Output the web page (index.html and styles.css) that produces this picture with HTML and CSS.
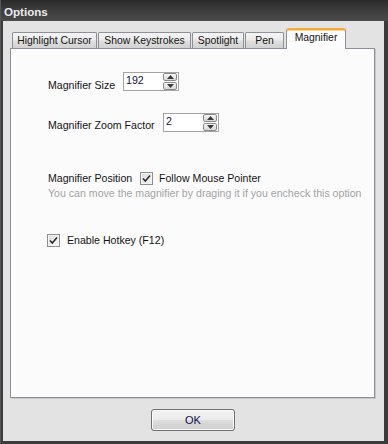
FILE: index.html
```html
<!DOCTYPE html>
<html>
<head>
<meta charset="utf-8">
<link rel="stylesheet" href="styles.css">
</head>
<body>
<div class="window">
  <div class="titlebar">Options</div>
  <div class="client">
    <div class="tabs">
      <div class="tab t1">Highlight Cursor</div>
      <div class="tab t2">Show Keystrokes</div>
      <div class="tab t3">Spotlight</div>
      <div class="tab t4">Pen</div>
      <div class="tab selected t5">Magnifier</div>
    </div>
    <div class="panel">
      <div class="row row-size">
        <span class="label w-size">Magnifier Size</span>
        <div class="spin">
          <span class="spin-value">192</span>
          <div class="spin-buttons">
            <div class="spin-btn"><svg width="7" height="4" viewBox="0 0 7 4"><path d="M0 4 L3.5 0 L7 4 Z" fill="#3a3a3a"/></svg></div>
            <div class="spin-btn"><svg width="7" height="4" viewBox="0 0 7 4"><path d="M0 0 L3.5 4 L7 0 Z" fill="#3a3a3a"/></svg></div>
          </div>
        </div>
      </div>
      <div class="row row-zoom">
        <span class="label w-zoom">Magnifier Zoom Factor</span>
        <div class="spin">
          <span class="spin-value">2</span>
          <div class="spin-buttons">
            <div class="spin-btn"><svg width="7" height="4" viewBox="0 0 7 4"><path d="M0 4 L3.5 0 L7 4 Z" fill="#3a3a3a"/></svg></div>
            <div class="spin-btn"><svg width="7" height="4" viewBox="0 0 7 4"><path d="M0 0 L3.5 4 L7 0 Z" fill="#3a3a3a"/></svg></div>
          </div>
        </div>
      </div>
      <div class="row row-pos">
        <span class="label w-pos">Magnifier Position</span>
        <span class="check"><svg width="11" height="11" viewBox="0 0 11 11"><path d="M2 5.5 L4.3 8 L9 2.5" fill="none" stroke="#2a2a2a" stroke-width="1.5"/></svg></span>
        <span class="check-text">Follow Mouse Pointer</span>
      </div>
      <div class="hint">You can move the magnifier by draging it if you encheck this option</div>
      <div class="row row-hotkey">
        <span class="check"><svg width="11" height="11" viewBox="0 0 11 11"><path d="M2 5.5 L4.3 8 L9 2.5" fill="none" stroke="#2a2a2a" stroke-width="1.5"/></svg></span>
        <span class="check-text hk">Enable Hotkey (F12)</span>
      </div>
    </div>
    <div class="footer">
      <div class="ok">OK</div>
    </div>
  </div>
</div>
</body>
</html>
```

FILE: styles.css
```css
html, body {
  margin: 0;
  padding: 0;
  background: #3a3a3a;
}
.window {
  width: 388px;
  height: 444px;
  box-sizing: border-box;
  display: flex;
  flex-direction: column;
  background: #3b3b3b;
  border-left: 1px solid #555;
  padding: 0 4px 3px 2px;
  font-family: "Liberation Sans", Arial, sans-serif;
  font-size: 10.6px;
  color: #141414;
}
.titlebar {
  height: 21px;
  margin: 0 -4px 0 -2px;
  padding: 3px 0 0 3px;
  box-sizing: border-box;
  line-height: 18px;
  font-weight: bold;
  font-size: 11.6px;
  color: #ececec;
  background: linear-gradient(#2a2a2a, #3a3a3a 40%, #4a4a4a);
}
.client {
  height: 420px;
  background: #e3e3e3;
  padding: 7px 9px 0 7px;
  box-sizing: border-box;
  display: flex;
  flex-direction: column;
}
.tabs {
  height: 20px;
  display: flex;
  align-items: flex-end;
  padding-left: 2px;
}
.tab {
  height: 16px;
  box-sizing: border-box;
  border: 1px solid #8e9099;
  border-bottom: none;
  border-radius: 2px 2px 0 0;
  background: linear-gradient(#f4f4f4, #ececec 45%, #dedede 55%, #d2d2d2);
  line-height: 15px;
  text-align: center;
  white-space: nowrap;
  margin-right: 1px;
  font-size: 10.4px;
}
.t1 { width: 85px; }
.t2 { width: 93px; }
.t3 { width: 52px; }
.t4 { width: 39px; }
.t5 { width: 60px; }
.tab.selected {
  height: 21px;
  margin-bottom: -1px;
  margin-left: 1px;
  background: #fcfcfc;
  border-top: 2px solid #f1ab3a;
  box-shadow: inset 0 1px 0 #fad38e;
  border-radius: 3px 3px 0 0;
  line-height: 16px;
  position: relative;
  z-index: 1;
}
.panel {
  height: 350px;
  box-sizing: border-box;
  border: 1px solid #8e9099;
  background: #fbfbfb;
  box-shadow: 1px 1px 0 #c6c6c6;
  padding-left: 37px;
}
.row {
  display: flex;
  align-items: flex-start;
}
.label {
  line-height: 13px;
  white-space: nowrap;
}
.row-size { margin-top: 23px; }
.row-zoom { margin-top: 21px; }
.row-size .label, .row-zoom .label { margin-top: 6.5px; }
.w-size { width: 75px; }
.w-zoom { width: 115px; }
.w-pos { width: 92px; }
.spin {
  width: 56px;
  height: 19px;
  box-sizing: border-box;
  border: 1px solid #a3a3a3;
  background: #fff;
  display: flex;
  justify-content: space-between;
  padding: 0 1px 0 2px;
}
.spin-value {
  line-height: 15px;
  color: #10104a;
}
.spin-buttons {
  width: 14px;
  display: flex;
  flex-direction: column;
  gap: 1px;
}
.spin-btn {
  flex: 1;
  box-sizing: border-box;
  border: 1px solid #8a8a8a;
  border-radius: 2px;
  background: linear-gradient(#f7f7f7, #e6e6e6 50%, #d8d8d8);
  display: flex;
  align-items: center;
  justify-content: center;
}
.spin-btn svg { display: block; }
.row-pos {
  margin-top: 40px;
  align-items: center;
  height: 13px;
}
.check {
  width: 13px;
  height: 13px;
  box-sizing: border-box;
  border: 1px solid #8e8f8f;
  background: linear-gradient(135deg, #dcdcdc, #f8f8f8);
  box-shadow: inset 0 0 0 1px #f4f4f4;
  display: flex;
  align-items: center;
  justify-content: center;
  flex: none;
}
.check svg { display: block; }
.check-text {
  margin-left: 6px;
  line-height: 13px;
  white-space: nowrap;
}
.check-text.hk { margin-left: 7px; }
.hint {
  margin-top: 2px;
  line-height: 13px;
  color: #a4a4a4;
  white-space: nowrap;
}
.row-hotkey {
  margin-top: 34px;
  margin-left: -1px;
  align-items: center;
  height: 13px;
}
.footer {
  display: flex;
  justify-content: center;
  margin-top: 11px;
  padding-left: 1px;
}
.ok {
  width: 84px;
  height: 22px;
  box-sizing: border-box;
  border: 1px solid #707070;
  border-radius: 3px;
  background: linear-gradient(#f2f2f2, #ebebeb 50%, #dddddd 50%, #cfcfcf);
  box-shadow: inset 0 0 0 1px #fbfbfb;
  text-align: center;
  line-height: 20px;
  font-size: 11px;
  color: #10104a;
}
```
